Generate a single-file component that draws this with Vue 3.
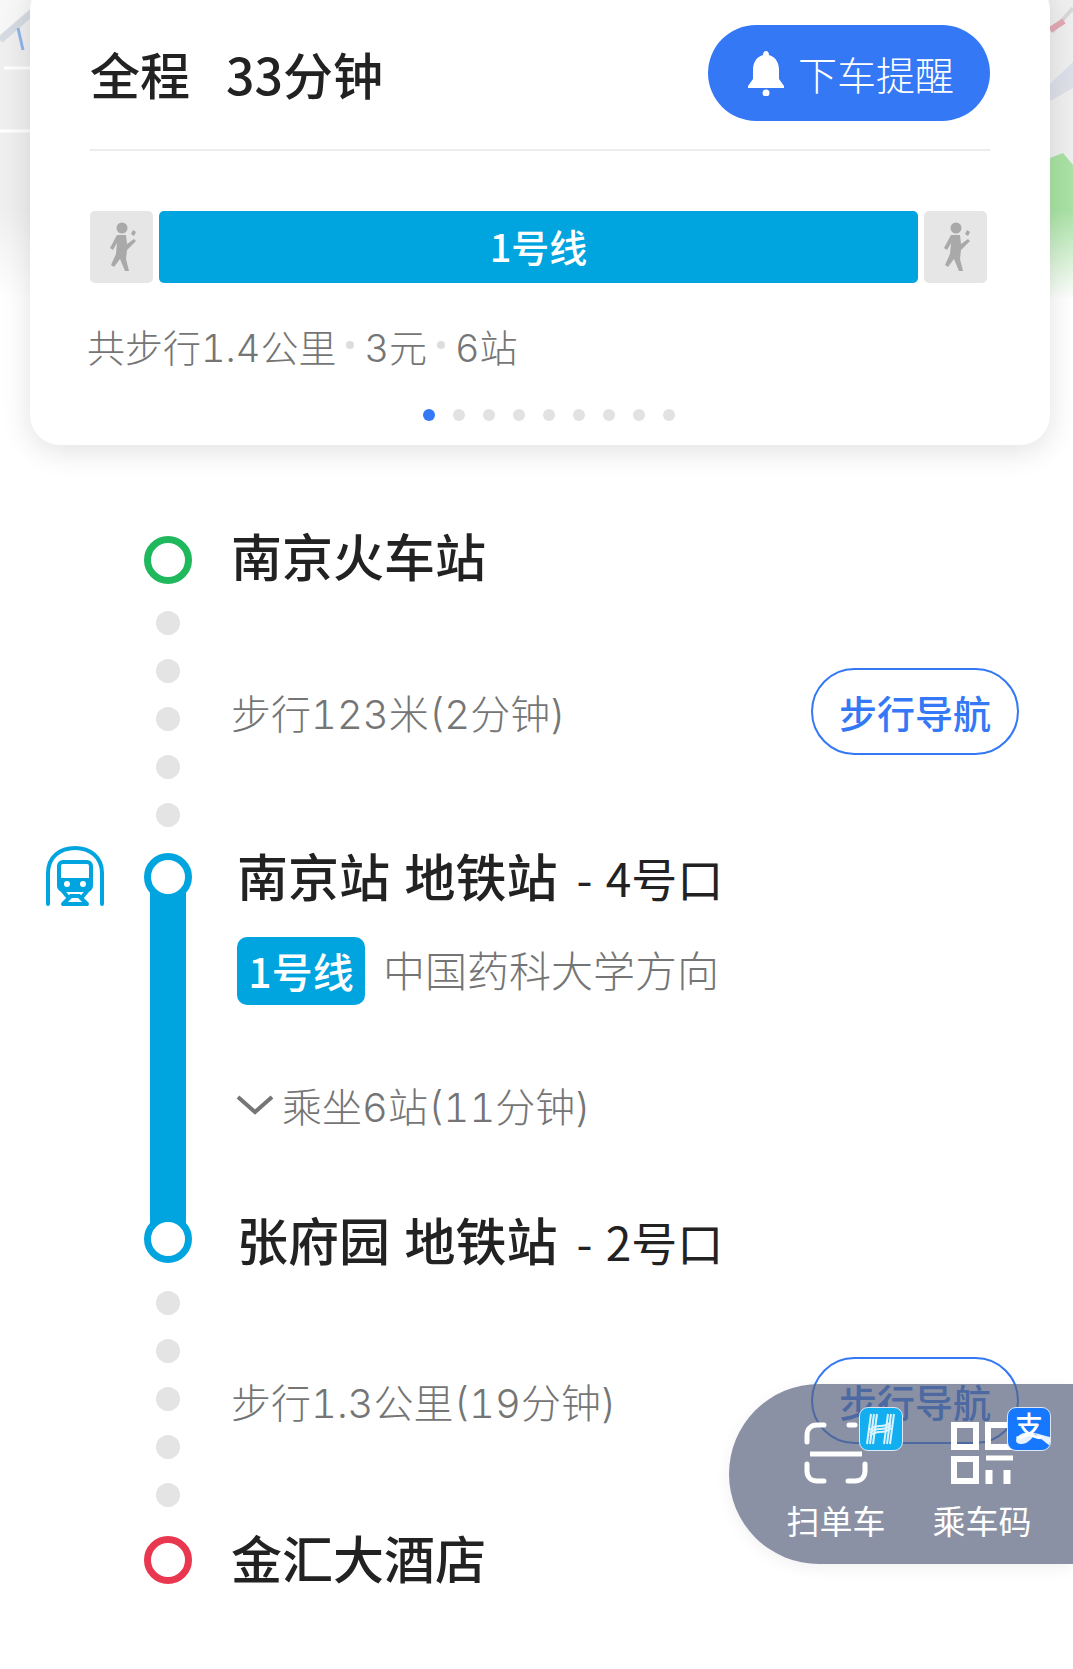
<script setup>
const dots = Array.from({ length: 9 }, (_, i) => i)
const links = [0, 1, 2, 3, 4]
</script>

<template>
  <div class="page">
    <svg class="map" width="1073" height="300" viewBox="0 0 1073 300">
      <path d="M0 0H1073V300H0Z" fill="#efefef" />
      <path d="M0 36 L44 0 H0Z" fill="#f7f7f7" />
      <path d="M0 40 L46 0" stroke="#d6dae2" stroke-width="7" fill="none" />
      <path d="M18 28 L23 50" stroke="#8db6ee" stroke-width="3" fill="none" />
      <path d="M4 68 H30 M0 131 H30" stroke="#fff" stroke-width="3" fill="none" />
      <path d="M1052 32 L1073 8" stroke="#d8d8d8" stroke-width="4" fill="none" />
      <path d="M1050 30 L1064 21" stroke="#e3a9b4" stroke-width="6" fill="none" />
      <path d="M1050 84 L1073 62 V88 L1050 101Z" fill="#dde0e8" />
      <path d="M1050 158 L1063 153 L1073 165 V300 H1050Z" fill="#a9e2a4" />
    </svg>

    <section class="card">
      <header class="card-head">
        <div class="total"><span>全程</span><span>33分钟</span></div>
        <button class="remind">
          <svg width="40" height="46" viewBox="0 0 40 46">
            <path d="M20 1c2 0 3 2 3 4 7 2 10 8 10 15v9l5 7v2H2v-2l5-7v-9c0-7 3-13 10-15 0-2 1-4 3-4z" fill="#fff" />
            <circle cx="20" cy="43" r="3.5" fill="#fff" />
          </svg>
          <span>下车提醒</span>
        </button>
      </header>
      <div class="segments">
        <div class="walk">
          <svg width="34" height="50" viewBox="0 0 34 50">
            <circle cx="17" cy="6" r="5.5" fill="#a9a9a9" />
            <path d="M12 13h9l1 9 7-5 2 2-9 9-1 9 3 12h-4l-5-12-6 8-3-2 5-11 1-11-4 7-3-2z" fill="#a9a9a9" />
            <path d="M28 8l3 2-2 4-3-2z" fill="#a9a9a9" />
          </svg>
        </div>
        <div class="line-bar">1号线</div>
        <div class="walk">
          <svg width="34" height="50" viewBox="0 0 34 50">
            <circle cx="17" cy="6" r="5.5" fill="#a9a9a9" />
            <path d="M12 13h9l1 9 7-5 2 2-9 9-1 9 3 12h-4l-5-12-6 8-3-2 5-11 1-11-4 7-3-2z" fill="#a9a9a9" />
            <path d="M28 8l3 2-2 4-3-2z" fill="#a9a9a9" />
          </svg>
        </div>
      </div>
      <div class="summary">
        <span>共步行1.4公里</span><i></i><span>3元</span><i></i><span>6站</span>
      </div>
      <div class="pager">
        <b v-for="d in dots" :key="d" :class="{ on: d === 0 }"></b>
      </div>
    </section>

    <main class="route">
      <div class="row stop">
        <div class="rail"><span class="ring green"></span></div>
        <h2>南京火车站</h2>
      </div>

      <div class="row walk-row">
        <div class="rail links">
          <span v-for="l in links" :key="l" class="link"></span>
        </div>
        <div class="walk-text">步行123米(2分钟)</div>
        <button class="nav">步行导航</button>
      </div>

      <div class="row metro">
        <svg class="train" width="60" height="62" viewBox="0 0 60 62">
          <path d="M3 59V28C3 12 15 3 30 3s27 9 27 25v31" fill="none" stroke="#00a5e0" stroke-width="4" stroke-linecap="round" />
          <rect x="14" y="17" width="32" height="28" rx="4" fill="none" stroke="#00a5e0" stroke-width="4" />
          <path d="M14 33h32v12H14z" fill="#00a5e0" />
          <circle cx="22" cy="39" r="3" fill="#fff" />
          <circle cx="38" cy="39" r="3" fill="#fff" />
          <path d="M18 59l8-8h8l8 8M17 45l5 6M43 45l-5 6M18 59h24" fill="none" stroke="#00a5e0" stroke-width="4" stroke-linecap="round" />
        </svg>
        <div class="rail metro-rail">
          <span class="ring blue"></span>
          <span class="pipe"></span>
          <span class="ring blue"></span>
        </div>
        <div class="metro-body">
          <h3>南京站 地铁站<em>- 4号口</em></h3>
          <div class="line-info">
            <span class="badge">1号线</span>
            <span class="direction">中国药科大学方向</span>
          </div>
          <div class="ride">
            <svg width="38" height="20" viewBox="0 0 38 20">
              <path d="M2 2l17 15L36 2" fill="none" stroke="#757575" stroke-width="4" />
            </svg>
            <span>乘坐6站(11分钟)</span>
          </div>
          <h3 class="last">张府园 地铁站<em>- 2号口</em></h3>
        </div>
      </div>

      <div class="row walk-row second">
        <div class="rail links">
          <span v-for="l in links" :key="l" class="link"></span>
        </div>
        <div class="walk-text">步行1.3公里(19分钟)</div>
        <button class="nav">步行导航</button>
      </div>

      <div class="row stop end">
        <div class="rail"><span class="ring red"></span></div>
        <h2>金汇大酒店</h2>
      </div>
    </main>

    <aside class="float">
      <div class="tool">
        <div class="tool-icon">
          <svg width="64" height="62" viewBox="0 0 64 62">
            <path d="M3 20v-7C3 7 7 3 13 3h7M45 3h6M3 42v7c0 6 4 10 10 10h7M61 42v7c0 6-4 10-10 10h-7" fill="none" stroke="#fff" stroke-width="5" stroke-linecap="round" />
            <path d="M6 32h52" stroke="#fff" stroke-width="5" />
          </svg>
          <span class="mini hello">
            <svg width="36" height="32" viewBox="0 0 36 32">
              <path d="M8 1L4 31M11 1L7 31M14 1L10 31M25 1L21 31M28 1L24 31M31 1L27 31" stroke="#d9f4ff" stroke-width="2" fill="none" />
              <path d="M7 20C14 12 20 20 28 12M7 17C14 9 20 17 28 9M7 23C14 15 20 23 28 15" stroke="#d9f4ff" stroke-width="2" fill="none" />
            </svg>
          </span>
        </div>
        <span>扫单车</span>
      </div>
      <div class="tool">
        <div class="tool-icon">
          <svg width="62" height="62" viewBox="0 0 62 62">
            <path d="M3 3h22v22H3zM3 37h22v22H3zM37 3h22v22H37z" fill="none" stroke="#fff" stroke-width="6" />
            <path d="M35 36h27" stroke="#fff" stroke-width="5" fill="none" />
            <path d="M38 48v14M56 48v14" stroke="#fff" stroke-width="7" fill="none" />
          </svg>
          <span class="mini ali">
            <svg width="42" height="42" viewBox="0 0 42 42">
              <path d="M42 38V29C34 27 24 23 16 25 8 27 5 35 12 36 18 37 24 31 27 26 32 30 37 34 42 38Z" fill="#fff" opacity=".9" />
            </svg>
            <span>支</span>
          </span>
        </div>
        <span>乘车码</span>
      </div>
    </aside>
  </div>
</template>

<style>
html, body { margin: 0; background: #fff; }
</style>

<style scoped>
.page {
  position: relative;
  width: 1073px;
  height: 1669px;
  overflow: hidden;
  background: #fff;
  font-family: "Noto Sans CJK SC", "Noto Sans", sans-serif;
  color: #222;
}
.map {
  position: absolute;
  left: 0;
  top: 0;
  -webkit-mask-image: linear-gradient(#000 70%, transparent);
  mask-image: linear-gradient(#000 70%, transparent);
}
.card {
  position: relative;
  margin: -20px 23px 0 30px;
  height: 465px;
  box-sizing: border-box;
  padding: 45px 60px 0;
  background: #fff;
  border-radius: 30px;
  box-shadow: 0 6px 30px rgba(0, 0, 0, .12);
}
.card-head {
  display: flex;
  justify-content: space-between;
  align-items: center;
  height: 95px;
  border-bottom: 2px solid #ececec;
  padding-bottom: 29px;
}
.total {
  display: flex;
  gap: 36px;
  font-size: 50px;
  font-weight: 500;
}
.remind {
  display: flex;
  align-items: center;
  gap: 12px;
  width: 282px;
  height: 96px;
  padding: 0 0 0 38px;
  border: 0;
  border-radius: 48px;
  background: #3478f6;
  color: #fff;
  font: 300 39px "Noto Sans CJK SC", sans-serif;
}
.segments {
  display: flex;
  gap: 6px;
  width: 897px;
  margin-top: 60px;
}
.walk {
  flex: 0 0 63px;
  height: 72px;
  display: flex;
  align-items: center;
  justify-content: center;
  background: #e6e6e6;
  border-radius: 5px;
}
.line-bar {
  flex: 1;
  height: 72px;
  line-height: 70px;
  text-align: center;
  background: #00a5e0;
  border-radius: 5px;
  color: #fff;
  font-size: 38px;
  font-weight: 500;
}
.summary {
  display: flex;
  align-items: center;
  margin: 34px 0 0 -3px;
  height: 56px;
  font-family: Inter, "Noto Sans CJK SC", sans-serif;
  font-size: 38px;
  font-weight: 300;
  font-variant-numeric: tabular-nums;
  color: #757575;
}
.summary i {
  width: 8px;
  height: 8px;
  margin: 0 10px;
  border-radius: 50%;
  background: #ddd;
}
.pager {
  display: flex;
  justify-content: center;
  gap: 18px;
  margin: 36px 0 0 18px;
}
.pager b {
  width: 12px;
  height: 12px;
  border-radius: 50%;
  background: #e2e2e2;
}
.pager b.on { background: #3478f6; }
.route {
  padding: 91px 0 0 144px;
  position: relative;
}
.row {
  position: relative;
  display: flex;
}
.rail {
  flex: 0 0 48px;
  display: flex;
  flex-direction: column;
  align-items: center;
}
.ring {
  box-sizing: border-box;
  flex: none;
  width: 48px;
  height: 48px;
  border: 7px solid;
  border-radius: 50%;
  background: #fff;
  position: relative;
  z-index: 1;
}
.ring.green { border-color: #1fb85c; }
.ring.blue { border-color: #00a5e0; }
.ring.red { border-color: #e8374f; }
.stop h2 {
  margin: -5px 0 0 39px;
  font-size: 51px;
  font-weight: 500;
  line-height: 48px;
}
.walk-row {
  height: 269px;
  margin-top: 3px;
}
.links {
  gap: 24px;
  padding-top: 24px;
}
.link {
  width: 24px;
  height: 24px;
  border-radius: 50%;
  background: #e4e4e4;
}
.walk-text {
  margin: 99px 0 0 39px;
  height: 58px;
  font-family: Inter, "Noto Sans CJK SC", sans-serif;
  font-size: 40px;
  font-weight: 300;
  font-variant-numeric: tabular-nums;
  line-height: 58px;
  color: #757575;
}
.nav {
  position: absolute;
  left: 667px;
  top: 81px;
  width: 208px;
  height: 87px;
  background: #fff;
  border: 2px solid #3478f6;
  border-radius: 44px;
  color: #3478f6;
  font: 500 38px "Noto Sans CJK SC", sans-serif;
}
.metro {
  margin-top: -3px;
}
.train {
  position: absolute;
  left: -99px;
  top: -8px;
}
.metro-rail {
  height: 410px;
}
.pipe {
  flex: 1;
  width: 36px;
  margin: -8px 0;
  background: #00a5e0;
}
.metro-body {
  margin-left: 45px;
}
.metro-body h3 {
  margin: -6px 0 0;
  height: 56px;
  font-size: 51px;
  font-weight: 500;
  line-height: 56px;
  word-spacing: 3px;
  white-space: nowrap;
}
.metro-body em {
  margin-left: 19px;
  font-style: normal;
  font-size: 46px;
  font-weight: 400;
}
.line-info {
  display: flex;
  align-items: center;
  gap: 18px;
  margin: 34px 0 0 0;
  font-size: 42px;
  font-weight: 300;
  color: #757575;
}
.direction {
  margin-bottom: 6px;
}
.badge {
  width: 128px;
  height: 68px;
  line-height: 66px;
  text-align: center;
  border-radius: 10px;
  background: #00a5e0;
  color: #fff;
  font-size: 41px;
  font-weight: 500;
}
.ride {
  display: flex;
  align-items: center;
  gap: 8px;
  margin: 70px 0 0 -1px;
  height: 60px;
  font-family: Inter, "Noto Sans CJK SC", sans-serif;
  font-size: 40px;
  font-weight: 300;
  font-variant-numeric: tabular-nums;
  color: #757575;
}
.metro-body h3.last {
  margin: 76px 0 -10px;
}
.second {
  height: 269px;
  margin-top: 4px;
}
.second .walk-text {
  margin-top: 108px;
}
.second .nav {
  top: 90px;
}
.end h2 {
  margin-top: -3px;
}
.float {
  position: absolute;
  right: 0;
  top: 1384px;
  width: 344px;
  height: 180px;
  box-sizing: border-box;
  padding: 0 0 0 57px;
  display: flex;
  gap: 46px;
  border-radius: 90px 0 0 90px;
  background: rgba(88, 98, 126, .7);
  box-shadow: 0 4px 16px rgba(0, 0, 0, .06);
  color: #fff;
  font-size: 33px;
}
.tool {
  width: 100px;
  display: flex;
  flex-direction: column;
  align-items: center;
  padding-top: 38px;
}
.tool-icon {
  position: relative;
  height: 66px;
  margin-bottom: 8px;
}
.mini {
  position: absolute;
  left: 55px;
  top: -15px;
  width: 44px;
  height: 44px;
  display: flex;
  align-items: center;
  justify-content: center;
  box-sizing: border-box;
  border: 1px solid #dbe7f5;
  border-radius: 9px;
}
.hello { background: #12aef0; }
.ali {
  left: 56px;
  align-items: flex-start;
  background: #1677ff;
  color: #fff;
  font-size: 28px;
  line-height: 34px;
  font-weight: 500;
}
.ali svg {
  position: absolute;
  left: 0;
  top: 0;
  border-radius: 0 0 8px 0;
}
.ali span {
  position: relative;
}
</style>
